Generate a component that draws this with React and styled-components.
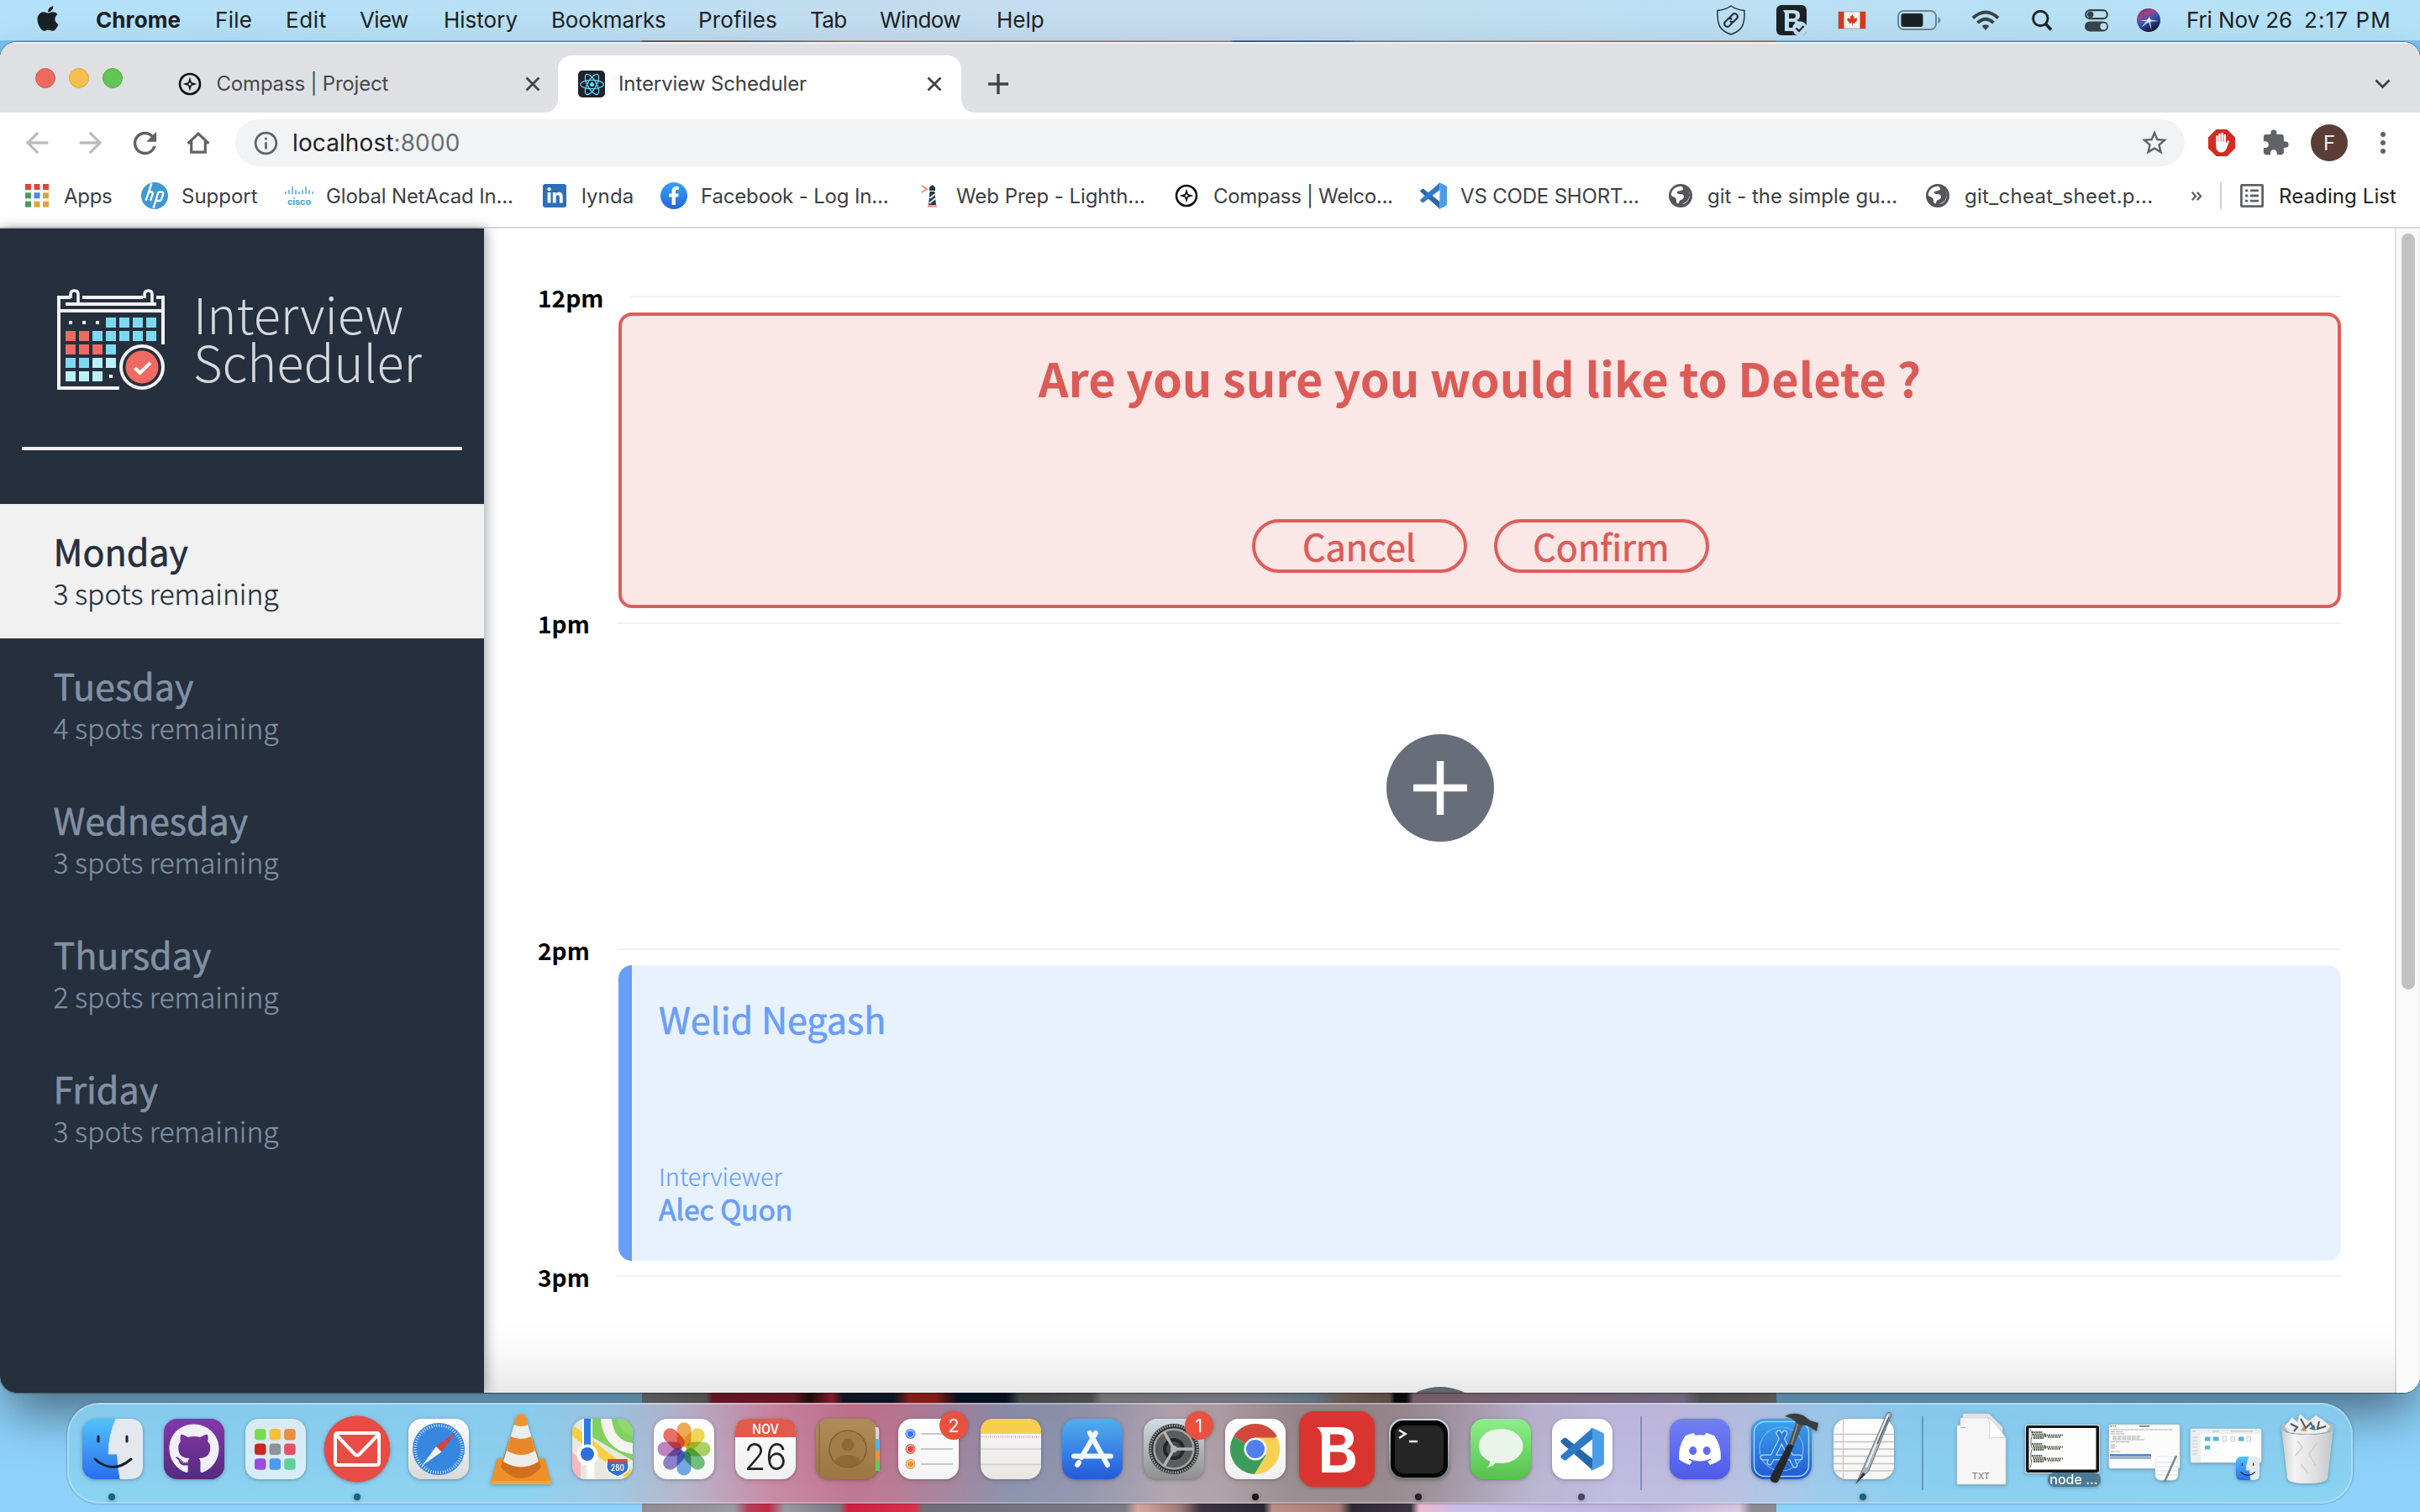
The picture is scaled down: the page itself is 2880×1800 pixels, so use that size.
import React from 'react';
import styled, { createGlobalStyle, css } from 'styled-components';
import {
  FaApple, FaReact, FaLinkedinIn, FaFacebookF, FaGithub, FaDiscord,
  FaCanadianMapleLeaf,
} from 'react-icons/fa';
import {
  MdArrowBack, MdArrowForward, MdRefresh, MdInfoOutline, MdStarBorder, MdExtension,
} from 'react-icons/md';

const UI = '"Inter", "Liberation Sans", sans-serif';
const APP = '"Noto Sans CJK SC", "Open Sans", sans-serif';

const GlobalStyle = createGlobalStyle`
  * { box-sizing: border-box; }
  body { margin: 0; overflow: hidden; background: #85c9f3; }
  svg { display: block; flex: none; overflow: visible; }
`;

/* ---------- desktop ---------- */

const Desktop = styled.div`
  display: flex;
  flex-direction: column;
  width: 2880px;
  height: 1800px;
  overflow: hidden;
  font-family: ${UI};
  background:
    linear-gradient(90deg, #777 0, #8c7c70 120px, #6f87a5 130px, #b9a99c 240px, #a9a9ae 420px, #c4b1aa 700px,
      #4f7fb4 704px, #5b86b5 840px, #8da3bf 850px, #a9b6c6 950px, #b6a9a0 1100px, #a89b98 1350px) 764px 0 / 1350px 60px no-repeat,
    linear-gradient(90deg, #8b8b8b 0, #7d7a7c 76px, #a02036 84px, #98233a 180px, #2a1518 200px, #d02845 226px, #1a2030 240px,
      #16233c 300px, #d42c22 320px, #cc2a22 350px, #0c1a34 376px, #0c1a34 434px, #6a6b70 450px, #77767c 535px,
      #b6b1b9 548px, #aeb6c4 740px, #8fb0c8 800px, #a08a84 830px, #8f7468 890px, #111 896px, #111 910px,
      #b48fa0 918px, #b495ae 1060px, #a79cc2 1240px, #77777c 1260px, #85858a 1350px) 764px 1650px / 1350px 40px no-repeat,
    linear-gradient(90deg, #8f8d92 0, #9b99a0 110px, #b04058 126px, #c22844 150px, #9b99a0 170px, #7a7880 235px, #cf1f40 245px,
      #d8304a 325px, #6f6e78 335px, #7d7b86 575px, #d3a89e 590px, #a07a78 640px, #3c343f 665px, #2c2734 740px,
      #b98f86 750px, #a87c74 830px, #2f2935 845px, #3c3340 915px, #efb8d0 925px, #c9bfe8 970px, #bdb3dc 1200px,
      #d8c8e0 1306px, #8d8b92 1320px, #8d8b92 1350px) 764px 1780px / 1350px 20px no-repeat,
    linear-gradient(180deg, #79bff0 0, #8ed2fb 100%);
`;

const MenuBar = styled.header`
  display: flex;
  align-items: center;
  height: 48px;
  flex: none;
  margin-bottom: 2px;
  padding-left: 40px;
  color: #1b2226;
  font-size: 26px;
  line-height: 46px;
  background: linear-gradient(90deg, #b3e1f9 0, #b7e0f7 500px, #c2dcef 1000px, #c5dcef 1500px, #bcdff3 2050px, #b3e2f8 2880px);
`;
const AppleMark = styled.div`
  width: 74px;
  padding-bottom: 4px;
`;
const MenuItem = styled.span`
  width: ${p => p.$w}px;
  flex: none;
  white-space: nowrap;
  font-weight: ${p => (p.$bold ? 700 : 400)};
  letter-spacing: ${p => p.$ls || 0}px;
`;
const StatusIcon = styled.span`
  display: flex;
  justify-content: center;
  flex: none;
  width: ${p => p.$w}px;
`;
const Spacer = styled.div`flex: 1;`;

/* ---------- browser window ---------- */

const Window = styled.section`
  position: relative;
  display: flex;
  flex-direction: column;
  flex: none;
  height: 1608px;
  border-radius: 20px;
  overflow: hidden;
  background: #fff;
`;
const WindowFrame = styled.div`
  flex: none;
  border-radius: 20px;
  margin-bottom: 12px;
  box-shadow: 0 0 1px 1px rgba(0, 0, 0, 0.35), 0 30px 60px -8px rgba(0, 0, 0, 0.5);
`;
const BottomShade = styled.div`
  position: absolute;
  left: 0;
  right: 28px;
  bottom: 0;
  height: 86px;
  pointer-events: none;
  background: linear-gradient(180deg, rgba(0, 0, 0, 0) 0, rgba(0, 0, 0, 0.02) 40%, rgba(0, 0, 0, 0.09) 100%);
`;
const TabStrip = styled.div`
  display: flex;
  align-items: flex-end;
  height: 84px;
  flex: none;
  background: #dee0e4;
  box-shadow: inset 0 2px 0 #f1f2f4;
`;
const Lights = styled.div`
  display: flex;
  gap: 16px;
  padding: 0 0 29px 42px;
  width: 196px;
`;
const Light = styled.i`
  width: 24px;
  height: 24px;
  border-radius: 50%;
  background: ${p => p.$c};
  border: 1px solid ${p => p.$b};
`;
const Tab = styled.div`
  position: relative;
  display: flex;
  align-items: center;
  height: 68px;
  width: ${p => p.$w}px;
  padding: 0 ${p => p.$pr}px 0 ${p => p.$pl}px;
  font-size: 24px;
  color: #45494d;
  ${p => p.$active && css`
    background: #fff;
    border-radius: 16px 16px 0 0;
    color: #3c4043;
    &::before, &::after {
      content: '';
      position: absolute;
      bottom: 0;
      width: 16px;
      height: 16px;
    }
    &::before { left: -16px; background: radial-gradient(circle at 0 0, transparent 15.5px, #fff 16.5px); }
    &::after { right: -16px; background: radial-gradient(circle at 100% 0, transparent 15.5px, #fff 16.5px); }
  `}
`;
const TabTitle = styled.span`
  flex: 1;
  padding: 0 0 2px ${p => p.$gap}px;
  white-space: nowrap;
  letter-spacing: ${p => p.$ls || 0}px;
`;
const NewTab = styled.div`
  display: flex;
  align-items: center;
  height: 68px;
  padding-left: 31px;
`;
const TabMenu = styled.div`
  display: flex;
  align-items: center;
  height: 68px;
  padding-right: 35px;
`;
const Toolbar = styled.div`
  display: flex;
  align-items: center;
  height: 72px;
  flex: none;
  padding: 0 24px 0 12px;
  color: #5f6368;
`;
const NavButton = styled.div`
  display: flex;
  justify-content: center;
  width: 64px;
  flex: none;
  margin-right: ${p => p.$mr || 0}px;
  color: ${p => (p.$off ? '#babcbe' : '#5f6368')};
`;
const Omnibox = styled.div`
  display: flex;
  align-items: center;
  width: 2320px;
  height: 56px;
  flex: none;
  border-radius: 28px;
  padding: 0 18px 0 20px;
  background: #f1f3f4;
`;
const Url = styled.span`
  flex: 1;
  padding-left: 15px;
  font-size: 28px;
  letter-spacing: 0.1px;
  color: #6a6e73;
  b { font-weight: 400; color: #202124; }
`;
const ToolSlot = styled.div`
  display: flex;
  justify-content: center;
  flex: none;
  width: ${p => p.$w}px;
`;
const Avatar = styled.div`
  width: 44px;
  height: 44px;
  border-radius: 50%;
  background: #5a3e36;
  color: #f3eeec;
  font-size: 24px;
  line-height: 45px;
  text-align: center;
`;
const Bookmarks = styled.div`
  display: flex;
  align-items: center;
  height: 66px;
  flex: none;
  padding: 0 0 10px 28px;
  border-bottom: 2px solid #d9dadb;
  font-size: 24px;
  color: #3c4043;
`;
const Bookmark = styled.div`
  display: flex;
  align-items: center;
  width: ${p => p.$w}px;
  flex: none;
  gap: 16px;
  white-space: nowrap;
  letter-spacing: ${p => p.$ls || 0}px;
  color: ${p => p.$c || 'inherit'};
`;
const BookmarkIcon = styled.span`
  display: flex;
  justify-content: center;
  width: 32px;
  flex: none;
`;
const Tile = styled.span`
  display: flex;
  align-items: center;
  justify-content: center;
  width: ${p => p.$s}px;
  height: ${p => p.$s}px;
  border-radius: ${p => p.$r};
  background: ${p => p.$bg};
  color: ${p => p.$c || '#fff'};
`;
const Overflow = styled.div`
  width: 34px;
`;
const Divider = styled.i`
  width: 2px;
  height: 32px;
  margin-right: 20px;
  background: #cfd2d6;
`;

/* ---------- scheduler page ---------- */

const Page = styled.main`
  display: flex;
  flex: 1;
  min-height: 0;
  font-family: ${APP};
`;
const Sidebar = styled.aside`
  width: 576px;
  flex: none;
  z-index: 1;
  background: #252f3d;
  box-shadow: 2px 0 14px rgba(37, 47, 61, 0.45);
`;
const Logo = styled.div`
  display: flex;
  gap: 34px;
  padding: 71px 0 0 68px;
  height: 193px;
`;
const Wordmark = styled.div`
  padding-top: 1px;
  font-size: 59.6px;
  font-weight: 300;
  line-height: 57.4px;
  color: #d6d8dc;
`;
const Rule = styled.hr`
  height: 4px;
  margin: 67px 26px 64px;
  border: 0;
  background: #f1f1f1;
`;
const Day = styled.div`
  height: 160px;
  padding: 29px 0 0 63.5px;
  background: ${p => (p.$selected ? '#f1f1f1' : 'transparent')};
  color: ${p => (p.$selected ? '#252f3d' : '#8190a4')};
`;
const DayName = styled.div`
  font-size: 43px;
  line-height: 52px;
  -webkit-text-stroke: 0.6px currentColor;
`;
const Spots = styled.div`
  margin-top: 2px;
  font-size: 33.6px;
  font-weight: 300;
  line-height: 46px;
  -webkit-text-stroke: 0.3px currentColor;
`;
const Schedule = styled.section`
  flex: 1;
  min-width: 0;
  padding: 80px 64px 0;
  overflow: hidden;
`;
const Slot = styled.article`
  height: 388.7px;
`;
const HourLine = styled.div`
  display: flex;
  align-items: flex-start;
  height: 20px;
`;
const Hour = styled.span`
  margin-top: -16.3px;
  padding-right: 32px;
  font-size: 28.1px;
  font-weight: 700;
  line-height: 36px;
  color: #000;
`;
const HourRule = styled.i`
  flex: 1;
  height: 2px;
  background: #f1f1f1;
`;
const ConfirmCard = styled.div`
  display: flex;
  flex-direction: column;
  align-items: center;
  justify-content: space-between;
  height: 352px;
  margin-left: 96px;
  padding: 33px 0 38px;
  border: 4px solid #dd5f5b;
  border-radius: 16px;
  background: #fae7e6;
  color: #dc5b57;
`;
const Question = styled.h1`
  margin: 0;
  font-size: 55.85px;
  font-weight: 700;
  line-height: 80px;
`;
const Actions = styled.div`
  display: flex;
  gap: 32px;
  padding-left: 2px;
`;
const Button = styled.button`
  width: 256px;
  height: 64px;
  padding: 0 1px 2px 0;
  border: 4px solid #dd5f5b;
  border-radius: 32px;
  background: transparent;
  color: inherit;
  font: 400 43.1px/54px ${APP};
  -webkit-text-stroke: 0.6px currentColor;
`;
const Appointment = styled.div`
  display: flex;
  flex-direction: column;
  justify-content: space-between;
  height: 352px;
  margin-left: 96px;
  padding: 33px 0 42px 32px;
  border-left: 16px solid #699ef8;
  border-radius: 16px;
  background: #e8f1fe;
  color: #699ef8;
`;
const Student = styled.div`
  font-size: 43px;
  line-height: 60px;
  -webkit-text-stroke: 0.6px currentColor;
`;
const Caption = styled.div`
  font-size: 28.8px;
  font-weight: 300;
  line-height: 38px;
  -webkit-text-stroke: 0.2px currentColor;
`;
const Interviewer = styled.div`
  font-size: 33.6px;
  line-height: 40px;
  -webkit-text-stroke: 0.8px currentColor;
`;
const EmptySlot = styled.div`
  display: flex;
  justify-content: center;
  padding: 113px 0 0 2px;
`;
const ScrollTrack = styled.div`
  width: 30px;
  flex: none;
  padding: 6px 6px 0;
  border-left: 2px solid #e6e6e6;
  border-right: 2px solid #f1f1f1;
  background: #fafafa;
`;
const ScrollThumb = styled.div`
  height: 900px;
  width: 16px;
  border-radius: 8px;
  background: #c1c1c1;
`;

/* ---------- dock ---------- */

const DockShelf = styled.nav`
  position: relative;
  display: flex;
  align-items: center;
  flex: none;
  width: 2720px;
  height: 120px;
  margin-left: 80px;
  padding: 0 3px;
  border-radius: 38px;
  border: 2px solid rgba(255, 255, 255, 0.28);
  box-shadow: 0 0 3px rgba(0, 0, 0, 0.4);
  background:
    linear-gradient(180deg, rgba(60, 130, 180, 0.08), rgba(140, 235, 255, 0.10)),
    linear-gradient(90deg, #8bd0f1 0, #8ed0f0 540px, #a3c5e0 650px, #bfaec4 740px, #d0809a 840px, #c56c86 930px,
      #c0708a 980px, #a87d95 1050px, #8d8ba6 1120px, #9590a6 1210px, #b7a0a8 1310px, #b39b9f 1370px, #9c8486 1460px,
      #9a8182 1560px, #a18a90 1620px, #bfb0cc 1740px, #c6b9df 1840px, #c5b8dc 1910px, #bcbfe0 1990px,
      #a2c8ea 2080px, #8ccdf0 2190px, #8bd0f1 100%);
`;
const DockItem = styled.div`
  position: relative;
  display: flex;
  align-items: center;
  justify-content: center;
  flex: none;
  width: 97.2px;
  height: 116px;
  padding-bottom: 10px;
  filter: drop-shadow(0 1px 2px rgba(0, 0, 0, 0.3));
`;
const RunningDot = styled.i`
  position: absolute;
  left: 44px;
  bottom: 2px;
  width: 8px;
  height: 8px;
  border-radius: 50%;
  background: ${p => p.$c};
`;
const Badge = styled.span`
  position: absolute;
  top: 8px;
  right: 2px;
  width: 34px;
  height: 34px;
  border-radius: 50%;
  background: #e9513f;
  color: #fff;
  font-size: 22px;
  line-height: 34px;
  text-align: center;
`;
const DockDivider = styled.i`
  width: 2px;
  height: 88px;
  flex: none;
  margin: 0 20.5px;
  background: rgba(60, 90, 130, 0.45);
`;
const MiniLabel = styled.span`
  position: absolute;
  right: 4px;
  bottom: 18px;
  width: 63px;
  height: 17px;
  border-radius: 8px;
  background: rgba(72, 118, 142, 0.9);
  color: #fff;
  font-size: 16px;
  font-weight: 500;
  line-height: 16px;
  text-align: center;
`;

/* ---------- drawings ---------- */

const Compass = ({ size = 28, color = '#111' }) => (
  <svg width={size} height={size} viewBox="0 0 28 28">
    <circle cx="14" cy="14" r="12" fill="none" stroke={color} strokeWidth="2.6" />
    <path d="M14 5.5 L15.9 12.1 L22.5 14 L15.9 15.9 L14 22.5 L12.1 15.9 L5.5 14 L12.1 12.1Z" fill={color} />
    <circle cx="14" cy="14" r="1.5" fill="#fff" />
  </svg>
);
const Close = () => (
  <svg width="18" height="18" viewBox="0 0 18 18" stroke="#3f4347" strokeWidth="2.8">
    <path d="M1.5 1.5 16.5 16.5M16.5 1.5 1.5 16.5" />
  </svg>
);
const VSCode = ({ size = 32 }) => (
  <svg width={size} height={size} viewBox="0 0 52 52">
    <path d="M1 18.5 Q-.5 17 1 15.5 L4 13 Q5.500 12 7 13 L38 37.500 V51 Z" fill="#2a66ad" />
    <path d="M1 33.500 Q-.5 35 1 36.500 L4 39 Q5.500 40 7 39 L38 14.500 V1 Z" fill="#2f7ac6" />
    <path d="M38 .8 L50 6.500 Q52 7.500 52 9.500 V42.500 Q52 44.500 50 45.500 L38 51.500 Q36 51.500 35.500 50 Q38 50 38 47 V5 Q38 2 35.500 2 Q36 .8 38 .8Z" fill="#4a9de9" />
  </svg>
);
const Globe = () => (
  <svg width="28" height="28" viewBox="0 0 28 28">
    <circle cx="14" cy="14" r="14" fill="#54565b" />
    <path d="M3 11 Q5 4 12 3 Q16 2 17 5 Q18 7 14 8 L10 9 Q9 12 13 12 Q18 12 18 15 Q18 18 14 19 Q12 20 12 23 Q9 24 9 20 Q9 16 5 15 Q2 14 3 11Z" fill="#fff" />
    <path d="M16 24 Q24 21 24.500 14 Q25 10 23 8 Q27 15 22 21 Q19 24.500 16 24Z" fill="#fff" />
  </svg>
);
const AppsGrid = () => (
  <svg width="28" height="28" viewBox="0 0 28 28">
    {['#e0453a', '#e0453a', '#e0453a', '#4a9a5b', '#4a87e8', '#e2a23b', '#4a9a5b', '#e2a23b', '#e2a23b'].map((c, i) => (
      <rect key={i} x={(i % 3) * 10.5} y={Math.floor(i / 3) * 10.3} width="7" height="7" fill={c} />
    ))}
  </svg>
);
const HpMark = () => (
  <svg width="32" height="32" viewBox="0 0 32 32">
    <circle cx="16" cy="16" r="16" fill="#3f97d6" />
    <g stroke="#fff" strokeWidth="2.4" fill="none">
      <path d="M12.500 1 L5.500 22M8.800 11.500 H12 Q14.500 11.500 13.700 14 L11 22" />
      <path d="M20.500 11.500 L14.500 31M20.500 11.500 H24 Q27 11.500 26 14.500 L24 20.500 Q23.300 22 21.500 22 H18" />
    </g>
  </svg>
);
const CiscoMark = () => (
  <svg width="34" height="26" viewBox="0 0 34 26">
    <g stroke="#4fa6cf" strokeWidth="1.5">
      {[3, 5, 9, 5, 3, 5, 9, 5, 3].map((h, i) => <path key={i} d={`M${1 + i * 4} ${11 - h}V11`} />)}
    </g>
    <text x="17" y="24" textAnchor="middle" fontFamily={UI} fontSize="11" fontWeight="700" fill="#4fa6cf" textLength="28" lengthAdjust="spacingAndGlyphs">cisco</text>
  </svg>
);
const Lighthouse = () => (
  <svg width="20" height="28" viewBox="0 0 20 28">
    <path d="M1 2 L7 6 L1 10" fill="none" stroke="#f08a7c" strokeWidth="2" />
    <path d="M10 4 L13.500 1 L17 4 V8 H10Z M10.500 9 H16.500 L18 25 H9Z" fill="#27374a" />
    <path d="M10.500 17 L17 12 M10 23 L17.500 17" stroke="#e9f2f7" strokeWidth="2" />
    <path d="M8 26.500 H19" stroke="#e88477" strokeWidth="2" />
  </svg>
);
const ReadingList = () => (
  <svg width="28" height="28" viewBox="0 0 28 28" fill="none" stroke="#5f6368" strokeWidth="2.800">
    <rect x="1.400" y="1.400" width="25.200" height="25.200" rx=".6" />
    <path d="M6 7.800 H9.300M12 7.800 H22M6 14 H9.300M12 14 H22M6 20.200 H9.300M12 20.200 H22" strokeWidth="2.800" />
  </svg>
);
const Home = () => (
  <svg width="30" height="28" viewBox="0 0 30 28" fill="none" stroke="#5f6368" strokeWidth="3.200">
    <path d="M2.500 14.800 L15 3.200 L27.500 14.800 M6.700 12 V25.200 H23.300 V12" />
  </svg>
);
const Shield = () => (
  <svg width="34" height="36" viewBox="0 0 34 36" fill="none" stroke="#2a353b" strokeWidth="1.500">
    <path d="M17 1 Q23 5.500 33 6.500 Q33.500 20 30 26 Q26 32 17 35 Q8 32 4 26 Q.5 20 1 6.500 Q11 5.500 17 1Z" />
    <g strokeWidth="2.200" strokeLinecap="round">
      <path d="M15 15.500 L19 11 Q21.500 9 24 11.500 Q26 14 24 16 L20.500 19.500 Q18.500 21 16.500 19.500" />
      <path d="M19 20.500 L15 25 Q12.500 27 10 24.500 Q8 22 10 20 L13.500 16.500 Q15.500 15 17.500 16.500" />
    </g>
  </svg>
);
const BitSmall = () => (
  <svg width="36" height="36" viewBox="0 0 36 36">
    <rect width="36" height="36" rx="6" fill="#1b2226" />
    <path fillRule="evenodd" d="M8 6 H21 Q28 6 28 12.500 Q28 17 24 18 Q29 20 29 25 V31 H10 V9.500Z M15 10 V16 H20 Q23 16 23 13 Q23 10 20 10Z M15 20 V27 H20 Q24 27 24 23.500 Q24 20 20 20Z" fill="#bfdff2" />
    <circle cx="28" cy="28" r="8.800" fill="#bfdff2" />
    <path d="M23.500 27.500 L27 31 L32.500 25" fill="none" stroke="#1b2226" strokeWidth="2.200" />
  </svg>
);
const Flag = () => (
  <svg width="32" height="20" viewBox="0 0 32 20">
    <rect width="32" height="20" fill="#f6f4f3" stroke="#999" strokeWidth=".8" />
    <path d="M0 0H6.500V20H0ZM25.500 0H32V20H25.500Z" fill="#d43a1d" />
    <FaCanadianMapleLeaf x="9.500" y="3.200" size={13.5} color="#d43a1d" />
  </svg>
);
const Battery = () => (
  <svg width="52" height="24" viewBox="0 0 52 24">
    <rect x="1" y="1" width="45" height="22" rx="6.500" fill="none" stroke="#6d8694" strokeWidth="2" />
    <rect x="4.500" y="4" width="26" height="16" rx="3" fill="#1b2226" />
    <path d="M48.500 8 Q51.500 9.500 51.500 12 Q51.500 14.500 48.500 16Z" fill="#6d8694" />
  </svg>
);
const Wifi = () => (
  <svg width="34" height="25" viewBox="0 0 34 25" fill="none" stroke="#38444a" strokeWidth="4">
    <path d="M2 9.500 Q17 -4.500 32 9.500M7.500 15 Q17 6.500 26.500 15" />
    <path d="M12.500 19 Q17 15.500 21.500 19 L17 24Z" fill="#38444a" stroke="none" />
  </svg>
);
const Search = () => (
  <svg width="25" height="25" viewBox="0 0 25 25" fill="none" stroke="#1b2226" strokeWidth="2.900">
    <circle cx="10.300" cy="10" r="8.700" /><path d="M16.500 16.500 L23 23.500" strokeWidth="3.600" />
  </svg>
);
const Controls = () => (
  <svg width="28" height="27" viewBox="0 0 28 27">
    <rect x="1.200" y="1.200" width="25.600" height="10" rx="5" fill="none" stroke="#38444a" strokeWidth="2.200" />
    <circle cx="6.800" cy="6.200" r="3.700" fill="#38444a" />
    <rect y="14.500" width="28" height="12" rx="6" fill="#38444a" />
    <circle cx="22.300" cy="20.500" r="3.900" fill="#b9def2" />
  </svg>
);
const Siri = () => (
  <svg width="28" height="28" viewBox="0 0 28 28">
    <defs>
      <linearGradient id="siri" x1="0" y1="0" x2=".5" y2="1">
        <stop offset="0" stopColor="#3b2b5e" /><stop offset=".32" stopColor="#a83f88" />
        <stop offset=".58" stopColor="#3a56b8" /><stop offset="1" stopColor="#15183c" />
      </linearGradient>
    </defs>
    <circle cx="14" cy="14" r="14" fill="url(#siri)" />
    <g fill="#bfeef6" fillOpacity=".9">
      <path d="M13 14 L15 9 L16 14Z M14 13 L26 15 L14 16Z M13.500 15 L17.500 26 L16 14Z M12.500 13.500 L5 23 L14.500 16Z M13 13.500 L3 14.500 L13 15.500Z" />
    </g>
    <circle cx="14.500" cy="14.300" r="2.200" fill="#fff" />
  </svg>
);
const StopHand = () => (
  <svg width="32" height="32" viewBox="0 0 32 32">
    <path d="M9.500 0H22.500L32 9.500V22.500L22.500 32H9.500L0 22.500V9.500Z" fill="#d12d20" />
    <g stroke="#fff" strokeWidth="2.500" strokeLinecap="round">
      <path d="M10.500 8.500V18M13.500 6V17M16.700 5V17M19.800 7V18M23.700 14.500L21 20" />
    </g>
    <path d="M9.300 15H21V19L24 15.500Q23 21 20.500 25Q18.500 27.500 15 27.500Q9.300 27 9.300 20Z" fill="#fff" />
  </svg>
);

const CALENDAR = [
  '...bbbb',
  'rrbbbbb',
  'rrrb',
  'bbll',
  'lll.',
];
const CELL = { b: '#7dd9f0', r: '#ee6a63', l: '#bbf0fb' };
const CalendarLogo = () => (
  <svg width="128" height="122" viewBox="0 0 128 122" fill="none" stroke="#f4f2f4" strokeWidth="4">
    <path d="M16 11H2V119H74M126 67V11H118M30 11H102M10 19H118M2 27H126" />
    <path d="M16 12V7.500Q16 3 20.500 3Q25 3 25 7.500V18M104 12V7.500Q104 3 108.500 3Q113 3 113 7.500V18" strokeWidth="3.600" />
    {CALENDAR.map((row, y) => [...row].map((c, x) => (c === '.'
      ? <rect key={`${x}${y}`} x={14 + x * 16} y={39 + y * 16} width="4" height="4" fill="#f4f2f4" stroke="none" />
      : <rect key={`${x}${y}`} x={10 + x * 16} y={35 + y * 16} width="12" height="12" fill={CELL[c]} stroke="none" />)))}
    <circle cx="101" cy="94" r="25" stroke="#f4f2f4" />
    <circle cx="101" cy="94" r="19.500" fill="#ee6a63" stroke="none" />
    <path d="M92.500 95 L98.500 101 L111 89" stroke="#fff" />
  </svg>
);
const AddButton = () => (
  <svg width="128" height="128" viewBox="0 0 128 128">
    <circle cx="64" cy="64" r="64" fill="#686e79" />
    <path d="M64 32V96M32 64H96" stroke="#fff" strokeWidth="8.500" />
  </svg>
);

/* ---------- dock icons ---------- */

const Icon = ({ children, grad, id, w = 72, h = 72, r = 16 }) => (
  <svg width={w} height={h} viewBox={`0 0 ${w} ${h}`}>
    <defs>
      <linearGradient id={id} x1="0" y1="0" x2="0" y2="1">
        <stop offset="0" stopColor={grad[0]} /><stop offset="1" stopColor={grad[1]} />
      </linearGradient>
      <clipPath id={`${id}-clip`}><rect width={w} height={h} rx={r} /></clipPath>
    </defs>
    <rect width={w} height={h} rx={r} fill={`url(#${id})`} />
    {children}
  </svg>
);
const Finder = ({ size, id }) => (
  <svg width={size} height={size} viewBox="0 0 72 72">
    <defs><linearGradient id={id} x1="0" y1="0" x2="0" y2="1"><stop offset="0" stopColor="#4fc4fb" /><stop offset="1" stopColor="#2a6cf0" /></linearGradient></defs>
    <rect width="72" height="72" rx="16" fill={`url(#${id})`} />
    <path d="M40 0H56Q72 0 72 16V56Q72 72 56 72H45Q42 58 41.500 42H31Q31 20 40 0Z" fill="#e4e9f0" />
    <path d="M40 0Q31 20 31 42H41.500Q42 58 45 72" fill="none" stroke="#c9dbea" strokeWidth="1" />
    <path d="M19 21V27M53 21V27" stroke="#14212e" strokeWidth="3" strokeLinecap="round" />
    <path d="M15 48Q36 67 58 48" fill="none" stroke="#14212e" strokeWidth="3" strokeLinecap="round" />
  </svg>
);
const Github = () => (
  <Icon id="gh" grad={['#8437ab', '#552a80']}>
    <FaGithub x="5.500" y="5.500" size={61} color="#f3eff6" />
  </Icon>
);
const Launchpad = () => (
  <Icon id="lp" grad={['#d9eaf2', '#d6eef8']}>
    {['#7ddb52', '#f3c03c', '#ea8f3c', '#c42a22', '#8d9399', '#e8506a', '#9a4ee0', '#4a9af5', '#5fcf9c'].map((c, i) => (
      <rect key={i} x={11 + (i % 3) * 17.6} y={12 + Math.floor(i / 3) * 17.6} width="13.500" height="13.500" rx="3.500" fill={c} />
    ))}
  </Icon>
);
const Mail = () => (
  <svg width="80" height="80" viewBox="0 0 80 80">
    <circle cx="40" cy="40" r="39.500" fill="#e84c44" />
    <path d="M14 24 Q14 21 17 21 H63 Q66 21 66 24 V56 Q66 59 63 59 H17 Q14 59 14 56Z M15 23 L37 46 Q40 49 43 46 L65 23" fill="none" stroke="#fff" strokeWidth="4" />
  </svg>
);
const Safari = () => (
  <Icon id="sf" grad={['#ffffff', '#d9d9d9']}>
    <circle cx="36" cy="36" r="31" fill="#3787e0" />
    <circle cx="36" cy="36" r="28" fill="none" stroke="#cfe5fb" strokeWidth="3.500" strokeDasharray="1 1.930" />
    <path d="M56 16 L39.500 39.500 L33 33Z" fill="#e0403a" />
    <path d="M16 56 L33 33 L39.500 39.500Z" fill="#f2f4f6" />
  </Icon>
);
const Vlc = () => (
  <svg width="72" height="84" viewBox="0 0 72 84">
    <path d="M8 53H64L72 82Q72 84 70 84H2Q0 84 0 82Z" fill="#f08f26" />
    <path d="M0 80 H72 V82 Q72 84 70 84 H2 Q0 84 0 82Z" fill="#f9a63a" />
    <path d="M12 64 Q36 90 60 64 L50 30 H22Z" fill="#cf6f20" />
    <path d="M31 2 Q36 -2 41 2 L57 57 Q36 70 15 57Z" fill="#ececec" />
    <path d="M31 2 Q36 -2 41 2 L44.500 13 Q36 17 27.500 13Z" fill="#f0932c" />
    <path d="M23.800 27 Q36 33 48.200 27 L53 44 Q36 54 19 44Z" fill="#e8872a" />
  </svg>
);
const Maps = () => (
  <Icon id="mp" grad={['#e9e7e0', '#e9e7e0']}>
    <g clipPath="url(#mp-clip)">
      <path d="M24 0H72V50L24 22Z" fill="#7fd25f" />
      <path d="M40 -4 Q42 34 76 36" fill="none" stroke="#f4f3ee" strokeWidth="13" />
      <path d="M52 -4 Q56 18 76 22 V-4Z" fill="#8fd96b" />
      <path d="M-2 12 L72 70" stroke="#f7cf45" strokeWidth="11" />
      <path d="M0 40 L10 48 V72 H0Z" fill="#f6b6c2" />
      <path d="M22 44V72" stroke="#fff" strokeWidth="9" />
      <path d="M18 0V44" stroke="#fff" strokeWidth="12" />
      <path d="M18 0V44" stroke="#2e7be6" strokeWidth="8" />
      <circle cx="18" cy="43" r="12.500" fill="#fff" /><circle cx="18" cy="42" r="8" fill="#2e6fe0" />
      <path d="M42 49 H66 Q69 58 65 63 Q60 67 54 69 Q48 67 43 63 Q39 58 42 49Z" fill="#3474cc" stroke="#fff" strokeWidth="1.500" />
      <path d="M42 48 H66 V52 H42Z" fill="#d8463b" />
    </g>
    <text x="54" y="62" fontSize="10" fontFamily={UI} fontWeight="600" fill="#fff" textAnchor="middle" textLength="16" lengthAdjust="spacingAndGlyphs">280</text>
  </Icon>
);
const Petal = styled.rect`
  mix-blend-mode: multiply;
`;
const Photos = () => (
  <Icon id="ph" grad={['#ffffff', '#f7f7f7']}>
    {['#f09a37', '#ecd23a', '#9ccc4a', '#5fb765', '#5b9fe0', '#7b6fc4', '#b56fb8', '#e8574e'].map((c, i) => (
      <Petal key={c} x="27.500" y="4.500" width="17" height="29" rx="8.500" fill={c} fillOpacity=".85" transform={`rotate(${i * 45} 36 36)`} />
    ))}
  </Icon>
);
const CalendarApp = () => (
  <Icon id="cal" grad={['#fdfdfd', '#f0f0f0']}>
    <path d="M0 22V16Q0 0 16 0H56Q72 0 72 16V22Z" fill="#e25a4c" />
    <text x="36" y="17.500" fontSize="15.500" fontFamily={UI} fontWeight="600" fill="#fff" textAnchor="middle" textLength="32" lengthAdjust="spacingAndGlyphs">NOV</text>
    <text x="36" y="61" fontSize="44" fontFamily={UI} fontWeight="300" fill="#222" textAnchor="middle" textLength="51" lengthAdjust="spacingAndGlyphs">26</text>
  </Icon>
);
const Contacts = () => (
  <Icon id="ct" grad={['#b08c58', '#9b7643']} w={74}>
    <path d="M70 10H74Q76 12 75 24H70Z" fill="#d6d6d6" /><path d="M70 24H76V38H70Z" fill="#55b6ea" />
    <path d="M70 38H76V50H70Z" fill="#ee9336" /><path d="M70 50H76V62H70Z" fill="#62cd5c" />
    <rect width="71" height="72" rx="15" fill="url(#ct)" /><path d="M4 6V66" stroke="#8e6c3c" strokeWidth="1.500" />
    <circle cx="38" cy="36" r="22" fill="#a07d49" stroke="#80602f" strokeWidth="1.500" />
    <circle cx="38" cy="31" r="7.500" fill="#8b6a38" /><path d="M22 50Q28 43 38 43Q48 43 54 50Q47 58 38 58Q29 58 22 50Z" fill="#8b6a38" />
  </Icon>
);
const Reminders = () => (
  <Icon id="rm" grad={['#ffffff', '#f4f4f4']}>
    {['#3478f0', '#dd4a3f', '#e8963a'].map((c, i) => (
      <g key={c}>
        <circle cx="14.500" cy={18 + i * 18} r="5.300" fill="none" stroke={c} strokeWidth="1.300" />
        <circle cx="14.500" cy={18 + i * 18} r="3.700" fill={c} />
        <path d={`M27 ${18 + i * 18}H65`} stroke="#b9b9b9" strokeWidth="1.600" />
      </g>
    ))}
  </Icon>
);
const Notes = () => (
  <Icon id="nt" grad={['#fafafa', '#e8e6e1']}>
    <path d="M0 18V16Q0 0 16 0H56Q72 0 72 16V18Z" fill="#f7cf4e" />
    <path d="M1 21.500H71" stroke="#a8a8a8" strokeWidth="2" strokeDasharray="1 1.500" />
    <path d="M0 36H72M0 54.500H72" stroke="#cfcfcf" strokeWidth="1.500" />
  </Icon>
);
const AppStore = () => (
  <Icon id="as" grad={['#4fb0ee', '#2459dc']}>
    <g stroke="#f2f7fd" strokeWidth="6" strokeLinecap="round">
      <path d="M40 17 L23 46M33 17 L54 55M20 52 L18 55M14 44.500H58" />
    </g>
  </Icon>
);
const Settings = () => (
  <Icon id="st" grad={['#cfdde4', '#8f8f8d']}>
    <circle cx="36" cy="36" r="30" fill="#2e2f31" />
    <circle cx="36" cy="36" r="28" fill="none" stroke="#9c9c9c" strokeWidth="3" strokeDasharray="1.600 1.330" />
    <circle cx="36" cy="36" r="23.500" fill="#5b5c5e" stroke="#a4a4a4" strokeWidth="2.500" />
    <circle cx="36" cy="36" r="11" fill="#48494b" stroke="#242527" strokeWidth="4" />
    <path d="M36 36H59M36 36L24.500 16M36 36L24.500 56" stroke="#b4b4b4" strokeWidth="3.500" />
    <circle cx="36" cy="36" r="4" fill="#b4b4b4" />
  </Icon>
);
const Chrome = () => (
  <Icon id="cr" grad={['#ffffff', '#f1f1f1']}>
    <path d="M36 36 L10 21 A30 30 0 0 1 62 21Z" fill="#d2493c" />
    <path d="M36 36 L10 21 A30 30 0 0 0 35 66 L49 43Z" fill="#3e9c5b" />
    <path d="M49 43.500 L35 66 A30 30 0 0 0 62 22.500 H36Z" fill="#f8d053" />
    <circle cx="36" cy="36" r="13.500" fill="#fff" /><circle cx="36" cy="36" r="11" fill="#4f80ee" />
  </Icon>
);
const Bitdefender = () => (
  <Icon id="bd" grad={['#da3530', '#d8342f']} w={90} h={90} r={18}>
    <path fillRule="evenodd" d="M21 19 H47 Q65 19 65 32.500 Q65 41.500 57 44.500 Q67 47.500 67 58 Q67 73 48 73 H27 V30 Q27 24 21 19Z M37 27.500 V40.500 H46 Q55 40.500 55 34 Q55 27.500 46 27.500Z M37 48.500 V64.500 H47 Q57 64.500 57 56.500 Q57 48.500 47 48.500Z" fill="#fff" />
  </Icon>
);
const Terminal = () => (
  <Icon id="tm" grad={['#c9dbe3', '#77787a']}>
    <rect x="2" y="2" width="68" height="68" rx="15" fill="#050505" />
    <rect x="7" y="8" width="58" height="57" rx="10" fill="#262626" />
    <path d="M12 13.500 L19.500 18 L12 23M24 27H34" fill="none" stroke="#f4f4f4" strokeWidth="2.600" />
  </Icon>
);
const Messages = () => (
  <Icon id="ms" grad={['#8cf08a', '#55c14c']}>
    <path d="M36 12C51 12 62.500 21 62.500 32.500S51 53 36 53Q33 53 30 52.500Q26 57 20 58Q23.500 54.500 23 50.500Q10 45 10 32.500C10 21 21 12 36 12Z" fill="#eaf5e9" />
  </Icon>
);
const Code = () => (
  <Icon id="vc" grad={['#ffffff', '#ffffff']}>
    <svg x="10" y="10" width="52" height="52"><VSCode size={52} /></svg>
  </Icon>
);
const Discord = () => (
  <Icon id="dc" grad={['#7180f3', '#4f5bea']}>
    <FaDiscord x="9" y="9" size={54} color="#fff" />
  </Icon>
);
const Xcode = () => (
  <Icon id="xc" grad={['#3ba3ec', '#2259cf']}>
    <rect x="3.500" y="3.500" width="65" height="65" rx="13" fill="none" stroke="#9dd4fa" strokeWidth="1.500" />
    <circle cx="36" cy="36" r="26" fill="none" stroke="#70b7f2" strokeWidth="1.200" />
    <g fill="none" stroke="#a8dafb" strokeWidth="7" strokeLinecap="round"><path d="M40 17 L22 52M33 17 L52 55M14 46H58" /></g>
    <g fill="none" stroke="#2c78dd" strokeWidth="4.500" strokeLinecap="round"><path d="M40 17 L22 52M33 17 L52 55M14 46H58" /></g>
    <path d="M44 30 L51 32 L33 73 Q31 78 25 75 Q22 74 23 69Z" fill="#26282b" />
    <path d="M54 3 L62 6 L51 32 L44 30Z" fill="#50565b" />
    <path d="M56 4 L48 30" stroke="#8c9297" strokeWidth="1.500" />
    <path d="M40 -3 Q50 -9 62 -4 L70 2 L80 5 L78 15 L70 10 Q66 7 60 8 L54 5 Q48 -2 40 -3Z" fill="#3a3d41" />
  </Icon>
);
const TextEdit = () => (
  <Icon id="te" grad={['#ffffff', '#f6f6f6']}>
    <path d="M0 18.500H72M0 27.500H72M0 36H72M0 44.500H72M0 53.500H72M0 62H72" stroke="#c4c4c4" strokeWidth="1.300" />
    <path d="M11.500 0V72" stroke="#f1b6b6" strokeWidth="1.300" />
    <path d="M64 -7 Q68 -9 69 -5 L42 62 L27 77 L36 57Z" fill="#a9b2bb" stroke="#66707a" strokeWidth="1" />
    <path d="M65 -5 L39 58" stroke="#eef2f5" strokeWidth="2" />
    <path d="M52 30 L66 -2" stroke="#4e5963" strokeWidth="1.500" /><path d="M27 77 L35 64 L38 66Z" fill="#2d3237" />
  </Icon>
);
const TextFiles = () => (
  <svg width="58" height="84" viewBox="0 0 58 84">
    <path d="M7 0H38L54 16V80H7Z" fill="#e4e4e4" stroke="#cfcfcf" strokeWidth=".8" />
    <path d="M0 14H4V5H36L58 29V84H0Z" fill="#f6f6f6" stroke="#d4d4d4" strokeWidth=".8" />
    <path d="M36 3 Q41 12 38 29 Q48 27 58 29 Q52 18 36 3Z" fill="#fff" stroke="#c8c8c8" strokeWidth=".8" />
    <path d="M4 16.500H11" stroke="#bbb" strokeWidth="1" />
    <text x="28.500" y="78" fontSize="11" fontFamily={UI} fill="#777" textAnchor="middle">TXT</text>
  </svg>
);
const NodeWindow = () => (
  <svg width="89" height="58" viewBox="0 0 89 58">
    <rect width="89" height="58" rx="3" fill="#dfe6ea" /><rect x="1" y="1" width="87" height="56" rx="2.500" fill="#111" />
    <rect x="4.500" y="4" width="80" height="49.500" fill="#fdfdfd" />
    {[9, 23, 37].map(y => (
      <g key={y} stroke="#5d6455" strokeWidth="2">
        <path d={`M8 ${y}H21M9 ${y + 2.4}H25M10 ${y + 4.8}H26M10 ${y + 7}H22`} strokeDasharray="2 .6" />
        <path d={`M23 ${y + 3.6}H45M27 ${y + 5.8}H42`} strokeDasharray="1.800 .8" />
      </g>
    ))}
    <path d="M6 6Q10 10 7 18V24Q10 28 7 34V40Q9 45 6 51" fill="none" stroke="#666" strokeWidth="1" />
  </svg>
);
const MiniWindow = styled.svg`
  margin-top: ${p => p.$drop}px;
`;
const EditWindow = () => (
  <MiniWindow $drop={14} width="84" height="72" viewBox="0 0 84 72">
    <rect width="84" height="52" rx="2" fill="#fcfcfc" stroke="#d8dde0" strokeWidth=".8" />
    <circle cx="2.500" cy="1.800" r="1" fill="#e55" /><circle cx="5" cy="1.800" r="1" fill="#eb4" /><circle cx="7.500" cy="1.800" r="1" fill="#5b5" />
    <path d="M36 1.800H48" stroke="#555" strokeWidth="1.300" />
    <path d="M2 6H75M2 8.500H16M2 11H18M4 14H38M4 16H36M4 18H42M2 20.500H24M2 24H8M2 26H9M2 28H7M2 32H14" stroke="#aaa" strokeWidth="1" strokeDasharray="5 .7" />
    <rect x="1" y="35.500" width="49" height="5.500" fill="#9cb4cf" /><path d="M1 36H50" stroke="#3d6ea8" strokeWidth="1.500" />
    <rect x="55" y="38" width="27" height="28" rx="6" fill="#fdfdfd" stroke="#ddd" strokeWidth=".7" />
    <path d="M56 45H82M56 50H82M56 55H82M56 60H82" stroke="#ccc" strokeWidth=".7" />
    <path d="M80 37 L66 68" stroke="#7d858c" strokeWidth="2.500" />
  </MiniWindow>
);
const FinderWindow = () => (
  <MiniWindow $drop={14} width="84" height="62" viewBox="0 0 84 62">
    <rect width="84" height="40" rx="2" fill="#fdfdfd" stroke="#d8dde0" strokeWidth=".8" />
    <path d="M0 2Q0 0 2 0H82Q84 0 84 2V6H12V40H2Q0 40 0 38Z" fill="#ebeff1" />
    <path d="M2 3H6M26 3H34M48 3H74" stroke="#bbb" strokeWidth="1" />
    <path d="M2 10H9M2 14H8M2 18H9M2 22H8M2 26H9M2 30H8" stroke="#ccc" strokeWidth="1" />
    {[17, 27, 57].map(x => <rect key={x} x={x} y="9.500" width="6.500" height="5" fill="#54b3e8" />)}
    {[38, 48, 67].map(x => <rect key={x} x={x} y="9" width="4.500" height="6" fill="#f3f3f3" stroke="#c4c4c4" strokeWidth=".7" />)}
    <rect x="17" y="20" width="6" height="4.500" fill="#54b3e8" />
    <svg x="54" y="33"><Finder size={28} id="finder-mini" /></svg>
  </MiniWindow>
);
const Trash = () => (
  <svg width="64" height="84" viewBox="0 0 64 84">
    <defs><linearGradient id="bin"><stop offset="0" stopColor="#c9ccce" /><stop offset=".25" stopColor="#f3f3f3" /><stop offset=".7" stopColor="#dcdcdc" /><stop offset="1" stopColor="#c2c6c9" /></linearGradient></defs>
    <path d="M1 17 Q4 25 32 25 Q60 25 63 17 L56 77 Q54 83 32 83 Q10 83 8 77Z" fill="url(#bin)" />
    <ellipse cx="32" cy="16" rx="31" ry="9" fill="#b4bbbf" />
    <path d="M5 15 L14 4 L20 10 L23 0 L33 9 L42 2 L50 7 L59 15 L54 22 Q32 26 10 22Z" fill="#eeeeec" />
    <path d="M12 12 L20 16 L16 21M24 6 L30 17 L36 11 L40 19M46 9 L44 18 L54 15" fill="none" stroke="#4d565c" strokeWidth="2" />
    <path d="M34 18 L40 13 L42 20Z" fill="#3f7d99" /><path d="M24 20 L28 15 L31 21Z" fill="#d08b4a" />
    <path d="M20 32 L26 40 L18 50 M44 34 L34 48 L42 62 M24 60 L32 70" fill="none" stroke="#cfcfcf" strokeWidth="1.500" />
  </svg>
);

/* ---------- data ---------- */

const MENU = [
  ['File', 84, 0.3], ['Edit', 88, 0.6], ['View', 100, -0.6], ['History', 128, 0], ['Bookmarks', 175, -0.16],
  ['Profiles', 133, 0.15], ['Tab', 83, -0.6], ['Window', 139, -0.6], ['Help', 80, 0],
];
const DAYS = [['Monday', 3], ['Tuesday', 4], ['Wednesday', 3], ['Thursday', 2], ['Friday', 3]];
const BOOKMARKS = [
  ['Apps', 140, -0.3, <AppsGrid />],
  ['Support', 172, 0, <HpMark />],
  ['Global NetAcad In...', 304, -0.15, <CiscoMark />],
  ['lynda', 142, 0.1, <Tile $s={28} $r="3px" $bg="#2c70b5"><FaLinkedinIn size={21} /></Tile>],
  ['Facebook - Log In...', 304, -0.16, <Tile $s={32} $r="50%" $bg="linear-gradient(#38a2f8, #2765da)"><FaFacebookF size={22} /></Tile>],
  ['Web Prep - Lighth...', 306, -0.06, <Lighthouse />],
  ['Compass | Welco...', 294, -0.31, <Compass />],
  ['VS CODE SHORT...', 294, -0.18, <VSCode />],
  ['git - the simple gu...', 306, 0, <Globe />],
  ['git_cheat_sheet.p...', 277, 0.28, <Globe />],
];
const DOCK = [
  [<Finder size={72} id="finder" />, '#17627f'], [<Github />], [<Launchpad />], [<Mail />, '#17627f'], [<Safari />], [<Vlc />], [<Maps />],
  [<Photos />], [<CalendarApp />], [<Contacts />], [<Reminders />, null, '2'], [<Notes />], [<AppStore />],
  [<Settings />, null, '1'], [<Chrome />, '#231216'], [<Bitdefender />], [<Terminal />, '#2f1a2b'], [<Messages />],
  [<Code />, '#4f3f66'], 'divider', [<Discord />], [<Xcode />], [<TextEdit />, '#17627f'], 'divider',
  [<TextFiles />], [<NodeWindow />, null, null, 'node ...'], [<EditWindow />], [<FinderWindow />], [<Trash />],
];

const TimeSlot = ({ hour, children }) => (
  <Slot>
    <HourLine><Hour>{hour}</Hour><HourRule /></HourLine>
    {children}
  </Slot>
);

export default function App() {
  return (
    <Desktop>
      <GlobalStyle />
      <MenuBar>
        <AppleMark><FaApple size={34} /></AppleMark>
        <MenuItem $w={142} $bold $ls={0.1}>Chrome</MenuItem>
        {MENU.map(([label, w, ls]) => <MenuItem key={label} $w={w} $ls={ls}>{label}</MenuItem>)}
        <Spacer />
        <StatusIcon $w={72}><Shield /></StatusIcon>
        <StatusIcon $w={72}><BitSmall /></StatusIcon>
        <StatusIcon $w={72}><Flag /></StatusIcon>
        <StatusIcon $w={88}><Battery /></StatusIcon>
        <StatusIcon $w={70}><Wifi /></StatusIcon>
        <StatusIcon $w={64}><Search /></StatusIcon>
        <StatusIcon $w={66}><Controls /></StatusIcon>
        <StatusIcon $w={58}><Siri /></StatusIcon>
        <Spacer as="span" style={{ flex: '0 0 16px' }} />
        <MenuItem $w={140} $ls={-0.1}>Fri Nov 26</MenuItem>
        <MenuItem $w={138} $ls={1.1}>2:17 PM</MenuItem>
      </MenuBar>

      <WindowFrame>
        <Window>
          <TabStrip>
            <Lights>
              <Light $c="#ed6a5f" $b="#d9574c" />
              <Light $c="#f5bf4f" $b="#dda63c" />
              <Light $c="#62c655" $b="#50ac42" />
            </Lights>
            <Tab $w={468} $pl={16} $pr={21}>
              <Compass /><TabTitle $gap={17.5} $ls={-0.19}>Compass | Project</TabTitle><Close />
            </Tab>
            <Tab $w={480} $pl={24} $pr={23} $active>
              <Tile $s={32} $r="5px" $bg="#20232a" $c="#61dafb"><FaReact size={29} /></Tile>
              <TabTitle $gap={16} $ls={-0.1}>Interview Scheduler</TabTitle><Close />
            </Tab>
            <NewTab>
              <svg width="26" height="26" viewBox="0 0 26 26"><path d="M13 1V25M1 13H25" stroke="#3f4347" strokeWidth="3.400" /></svg>
            </NewTab>
            <Spacer />
            <TabMenu>
              <svg width="19" height="12" viewBox="0 0 19 12"><path d="M1.500 1.500 L9.500 9.500 L17.500 1.500" fill="none" stroke="#3f4347" strokeWidth="2.800" /></svg>
            </TabMenu>
          </TabStrip>

          <Toolbar>
            <NavButton $off><MdArrowBack size={40} /></NavButton>
            <NavButton $off><MdArrowForward size={40} /></NavButton>
            <NavButton><MdRefresh size={41} /></NavButton>
            <NavButton $mr={12}><Home /></NavButton>
            <Omnibox>
              <MdInfoOutline size={33} />
              <Url><b>localhost</b>:8000</Url>
              <MdStarBorder size={36} />
            </Omnibox>
            <ToolSlot $w={88}><StopHand /></ToolSlot>
            <ToolSlot $w={40}><MdExtension size={34} /></ToolSlot>
            <ToolSlot $w={88}><Avatar>F</Avatar></ToolSlot>
            <ToolSlot $w={40}>
              <svg width="6" height="26" viewBox="0 0 6 26" fill="#5f6368"><circle cx="3" cy="3" r="3" /><circle cx="3" cy="13" r="3" /><circle cx="3" cy="23" r="3" /></svg>
            </ToolSlot>
          </Toolbar>

          <Bookmarks>
            {BOOKMARKS.map(([label, w, ls, icon]) => (
              <Bookmark key={label} $w={w} $ls={ls}><BookmarkIcon>{icon}</BookmarkIcon>{label}</Bookmark>
            ))}
            <Spacer />
            <Overflow>
              <svg width="12" height="11" viewBox="0 0 12 11" fill="none" stroke="#5f6368" strokeWidth="2.400"><path d="M.8 .8 L5 5.500 L.8 10.200M6.800 .8 L11 5.500 L6.800 10.200" /></svg>
            </Overflow>
            <Divider />
            <Bookmark $w={216} $ls={0.1} $c="#202124"><BookmarkIcon><ReadingList /></BookmarkIcon>Reading List</Bookmark>
          </Bookmarks>

          <Page>
            <Sidebar>
              <Logo>
                <CalendarLogo />
                <Wordmark>Interview<br />Scheduler</Wordmark>
              </Logo>
              <Rule />
              {DAYS.map(([day, spots]) => (
                <Day key={day} $selected={day === 'Monday'}>
                  <DayName>{day}</DayName>
                  <Spots>{spots} spots remaining</Spots>
                </Day>
              ))}
            </Sidebar>
            <Schedule>
              <TimeSlot hour="12pm">
                <ConfirmCard>
                  <Question>Are you sure you would like to Delete ?</Question>
                  <Actions><Button>Cancel</Button><Button>Confirm</Button></Actions>
                </ConfirmCard>
              </TimeSlot>
              <TimeSlot hour="1pm"><EmptySlot><AddButton /></EmptySlot></TimeSlot>
              <TimeSlot hour="2pm">
                <Appointment>
                  <Student>Welid Negash</Student>
                  <div><Caption>Interviewer</Caption><Interviewer>Alec Quon</Interviewer></div>
                </Appointment>
              </TimeSlot>
              <TimeSlot hour="3pm"><EmptySlot><AddButton /></EmptySlot></TimeSlot>
            </Schedule>
            <ScrollTrack><ScrollThumb /></ScrollTrack>
          </Page>
          <BottomShade />
        </Window>
      </WindowFrame>

      <DockShelf>
        {DOCK.map((item, i) => (item === 'divider' ? <DockDivider key={i} /> : (
          <DockItem key={i}>
            {item[0]}
            {item[1] && <RunningDot $c={item[1]} />}
            {item[2] && <Badge>{item[2]}</Badge>}
            {item[3] && <MiniLabel>{item[3]}</MiniLabel>}
          </DockItem>
        )))}
      </DockShelf>
    </Desktop>
  );
}
